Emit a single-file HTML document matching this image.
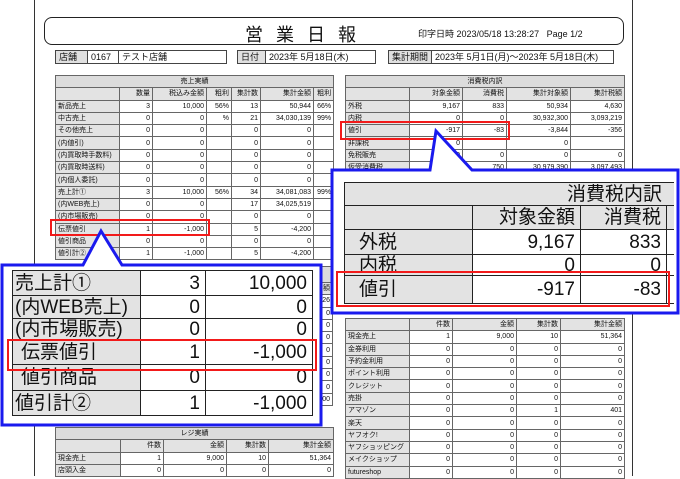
<!DOCTYPE html>
<html><head><meta charset="utf-8"><style>
*{margin:0;padding:0;box-sizing:border-box}
body{width:680px;height:476px;position:relative;overflow:hidden;background:#fff;font-family:"Liberation Sans","Noto Sans CJK JP",sans-serif;color:#111}
.a{position:absolute}
table{border-collapse:collapse;table-layout:fixed;position:absolute}
td{border:1px solid #666;font-size:7px;line-height:1;height:12.3px;padding:0 2px;text-align:right;white-space:nowrap;overflow:hidden}
td.l{background:#e3e3e3;text-align:left}
tr.h td{background:#dcdcdc;text-align:center}
tr.c td{background:#e3e3e3}
.box{border:1px solid #444;font-size:9px;height:14px;line-height:12px;padding-left:3px;white-space:nowrap}
.g{background:#e0e0e0}
.big td{font-size:19px;padding:0 5px;border:1.5px solid #222}
.big td.l{text-align:left}
.red{position:absolute;border:2.5px solid #f21a1a}
</style></head><body>
<div class="a" style="left:34px;top:0;width:599px;height:476px;border-left:1px solid #333;border-right:1px solid #333"></div>
<div class="a" style="left:44px;top:17px;width:580px;height:28px;border:1px solid #222;border-radius:8px"></div>
<div class="a" style="left:245px;top:21px;font-size:18px;letter-spacing:13px">営業日報</div>
<div class="a" style="left:418px;top:27px;font-size:9px">印字日時 2023/05/18 13:28:27 &nbsp; Page 1/2</div>

<div class="a box g" style="left:55px;top:50px;width:33px">店舗</div>
<div class="a box" style="left:87px;top:50px;width:32px">0167</div>
<div class="a box" style="left:118px;top:50px;width:109px">テスト店舗</div>
<div class="a box g" style="left:237px;top:50px;width:29px">日付</div>
<div class="a box" style="left:265px;top:50px;width:111px">2023年 5月18日(木)</div>
<div class="a box g" style="left:388px;top:50px;width:44px">集計期間</div>
<div class="a box" style="left:431px;top:50px;width:183px">2023年 5月1日(月)～2023年 5月18日(木)</div>

<table style="left:55px;top:75px;width:278px">
<col style="width:64px"><col style="width:33px"><col style="width:54px"><col style="width:25px"><col style="width:29px"><col style="width:53px"><col style="width:20px">
<tr class="h"><td colspan="7">売上実績</td></tr>
<tr class="c"><td></td><td>数量</td><td>税込み金額</td><td>粗利</td><td>集計数</td><td>集計金額</td><td>粗利</td></tr>
<tr><td class="l">新品売上</td><td>3</td><td>10,000</td><td>56%</td><td>13</td><td>50,944</td><td>66%</td></tr>
<tr><td class="l">中古売上</td><td>0</td><td>0</td><td>%</td><td>21</td><td>34,030,139</td><td>99%</td></tr>
<tr><td class="l">その他売上</td><td>0</td><td>0</td><td></td><td>0</td><td>0</td><td></td></tr>
<tr><td class="l">(内値引)</td><td>0</td><td>0</td><td></td><td>0</td><td>0</td><td></td></tr>
<tr><td class="l">(内買取時手数料)</td><td>0</td><td>0</td><td></td><td>0</td><td>0</td><td></td></tr>
<tr><td class="l">(内買取時送料)</td><td>0</td><td>0</td><td></td><td>0</td><td>0</td><td></td></tr>
<tr><td class="l">(内個人委託)</td><td>0</td><td>0</td><td></td><td>0</td><td>0</td><td></td></tr>
<tr><td class="l">売上計①</td><td>3</td><td>10,000</td><td>56%</td><td>34</td><td>34,081,083</td><td>99%</td></tr>
<tr><td class="l">(内WEB売上)</td><td>0</td><td>0</td><td></td><td>17</td><td>34,025,519</td><td></td></tr>
<tr><td class="l">(内市場販売)</td><td>0</td><td>0</td><td></td><td>0</td><td>0</td><td></td></tr>
<tr><td class="l">伝票値引</td><td>1</td><td>-1,000</td><td></td><td>5</td><td>-4,200</td><td></td></tr>
<tr><td class="l">値引商品</td><td>0</td><td>0</td><td></td><td>0</td><td>0</td><td></td></tr>
<tr><td class="l">値引計②</td><td>1</td><td>-1,000</td><td></td><td>5</td><td>-4,200</td><td></td></tr>
</table>

<table style="left:290px;top:266px;width:43px">
<tr class="h"><td style="height:16px"></td></tr><tr class="c"><td>金額</td></tr>
<tr><td>51,326</td></tr><tr><td>0</td></tr><tr><td>0</td></tr><tr><td>0</td></tr><tr><td>0</td></tr><tr><td>0</td></tr><tr><td>0</td></tr><tr><td>0</td></tr><tr><td>-4,200</td></tr>
</table>

<table style="left:345px;top:75px;width:279px">
<col style="width:64px"><col style="width:53px"><col style="width:44px"><col style="width:64px"><col style="width:54px">
<tr class="h"><td colspan="5">消費税内訳</td></tr>
<tr class="c"><td></td><td>対象金額</td><td>消費税</td><td>集計対象額</td><td>集計税額</td></tr>
<tr><td class="l">外税</td><td>9,167</td><td>833</td><td>50,934</td><td>4,630</td></tr>
<tr><td class="l">内税</td><td>0</td><td>0</td><td>30,932,300</td><td>3,093,219</td></tr>
<tr><td class="l">値引</td><td>-917</td><td>-83</td><td>-3,844</td><td>-356</td></tr>
<tr><td class="l">非課税</td><td>0</td><td></td><td>0</td><td></td></tr>
<tr><td class="l">免税販売</td><td>0</td><td>0</td><td>0</td><td>0</td></tr>
<tr><td class="l">仮受消費税</td><td></td><td>750</td><td>30,979,390</td><td>3,097,493</td></tr>
</table>

<table style="left:345px;top:318px;width:279px">
<col style="width:64px"><col style="width:43px"><col style="width:64px"><col style="width:44px"><col style="width:64px">
<tr class="c"><td></td><td>件数</td><td>金額</td><td>集計数</td><td>集計金額</td></tr>
<tr><td class="l">現金売上</td><td>1</td><td>9,000</td><td>10</td><td>51,364</td></tr>
<tr><td class="l">金券利用</td><td>0</td><td>0</td><td>0</td><td>0</td></tr>
<tr><td class="l">予約金利用</td><td>0</td><td>0</td><td>0</td><td>0</td></tr>
<tr><td class="l">ポイント利用</td><td>0</td><td>0</td><td>0</td><td>0</td></tr>
<tr><td class="l">クレジット</td><td>0</td><td>0</td><td>0</td><td>0</td></tr>
<tr><td class="l">売掛</td><td>0</td><td>0</td><td>0</td><td>0</td></tr>
<tr><td class="l">アマゾン</td><td>0</td><td>0</td><td>1</td><td>401</td></tr>
<tr><td class="l">楽天</td><td>0</td><td>0</td><td>0</td><td>0</td></tr>
<tr><td class="l">ヤフオク!</td><td>0</td><td>0</td><td>0</td><td>0</td></tr>
<tr><td class="l">ヤフショッピング</td><td>0</td><td>0</td><td>0</td><td>0</td></tr>
<tr><td class="l">メイクショップ</td><td>0</td><td>0</td><td>0</td><td>0</td></tr>
<tr><td class="l">futureshop</td><td>0</td><td>0</td><td>0</td><td>0</td></tr>
</table>

<table style="left:55px;top:427px;width:278px">
<col style="width:65px"><col style="width:43px"><col style="width:63px"><col style="width:42px"><col style="width:65px">
<tr class="h"><td colspan="5">レジ実績</td></tr>
<tr class="c"><td></td><td>件数</td><td>金額</td><td>集計数</td><td>集計金額</td></tr>
<tr><td class="l">現金売上</td><td>1</td><td>9,000</td><td>10</td><td>51,364</td></tr>
<tr><td class="l">店頭入金</td><td>0</td><td>0</td><td>0</td><td>0</td></tr>
</table>

<div class="red" style="left:340px;top:121px;width:170px;height:19px"></div>
<div class="red" style="left:50px;top:219px;width:160px;height:17px"></div>

<svg class="a" style="left:0;top:0" width="680" height="476">
<path d="M332 170 H430 L436 131 L472 170 H678 V313 H332 Z" fill="#fff" stroke="#1a1aee" stroke-width="3"/>
<path d="M2 265 H83 L101 231 L122 265 H321 V425 H2 Z" fill="#fff" stroke="#1a1aee" stroke-width="3"/>
</svg>
<div class="a" style="left:344px;top:182px;width:330px;height:122px;overflow:hidden">
<table class="big" style="left:0;top:0;width:360px">
<col style="width:128px"><col style="width:108px"><col style="width:86px"><col style="width:38px">
<tr class="h"><td colspan="4" style="height:23px;text-align:left;padding-left:222px;background:#e3e3e3">消費税内訳</td></tr>
<tr class="c"><td style="height:24px"></td><td style="text-align:right">対象金額</td><td style="text-align:right">消費税</td><td></td></tr>
<tr><td class="l" style="height:25px;padding-left:14px">外税</td><td>9,167</td><td>833</td><td></td></tr>
<tr><td class="l" style="height:21px;padding-left:14px">内税</td><td>0</td><td>0</td><td></td></tr>
<tr><td class="l" style="height:28px;padding-left:14px">値引</td><td>-917</td><td>-83</td><td></td></tr>
<tr><td class="l" style="height:20px"></td><td></td><td></td><td></td></tr>
</table></div>
<div class="red" style="left:336px;top:271px;width:334px;height:36px"></div>

<div class="a" style="left:12px;top:270px;width:301px;height:146px;overflow:hidden">
<table class="big" style="left:0;top:0;width:300px">
<col style="width:128px"><col style="width:65px"><col style="width:107px">
<tr><td class="l" style="height:25px;padding-left:2px">売上計①</td><td>3</td><td>10,000</td></tr>
<tr><td class="l" style="height:23px;padding-left:2px">(内WEB売上)</td><td>0</td><td>0</td></tr>
<tr><td class="l" style="height:22px;padding-left:2px">(内市場販売)</td><td>0</td><td>0</td></tr>
<tr><td class="l" style="height:24px;padding-left:8px">伝票値引</td><td>1</td><td>-1,000</td></tr>
<tr><td class="l" style="height:26px;padding-left:8px">値引商品</td><td>0</td><td>0</td></tr>
<tr><td class="l" style="height:25px;padding-left:2px">値引計②</td><td>1</td><td>-1,000</td></tr>
</table></div>
<div class="red" style="left:7px;top:339px;width:310px;height:32px"></div>
</body></html>
